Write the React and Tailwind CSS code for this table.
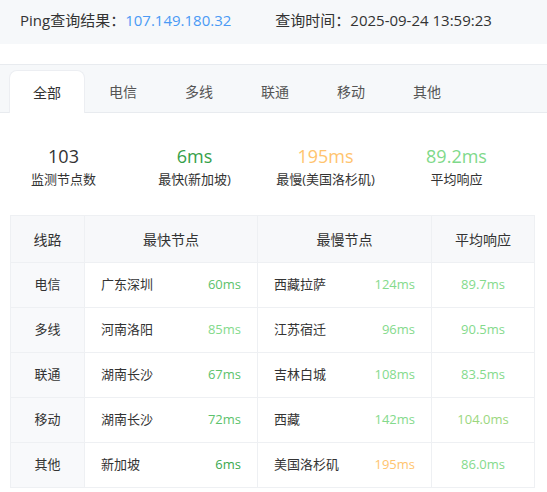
import React from 'react';

const FONT = { fontFamily: '"Open Sans", "Noto Sans CJK SC", sans-serif' };

const TABS = ['全部', '电信', '多线', '联通', '移动', '其他'];

const STATS = [
  { value: '103', label: '监测节点数', color: 'text-[#333333]' },
  { value: '6ms', label: '最快(新加坡)', color: 'text-[#36a04a]' },
  { value: '195ms', label: '最慢(美国洛杉矶)', color: 'text-[#ffc46e]' },
  { value: '89.2ms', label: '平均响应', color: 'text-[#7fd98a]' },
];

const ROWS = [
  { line: '电信', fast: '广东深圳', fastMs: '60ms', fastColor: 'text-[#5cc26c]', slow: '西藏拉萨', slowMs: '124ms', slowColor: 'text-[#84da8c]', avg: '89.7ms', avgColor: 'text-[#84da8c]' },
  { line: '多线', fast: '河南洛阳', fastMs: '85ms', fastColor: 'text-[#84da8c]', slow: '江苏宿迁', slowMs: '96ms', slowColor: 'text-[#84da8c]', avg: '90.5ms', avgColor: 'text-[#84da8c]' },
  { line: '联通', fast: '湖南长沙', fastMs: '67ms', fastColor: 'text-[#5cc26c]', slow: '吉林白城', slowMs: '108ms', slowColor: 'text-[#84da8c]', avg: '83.5ms', avgColor: 'text-[#84da8c]' },
  { line: '移动', fast: '湖南长沙', fastMs: '72ms', fastColor: 'text-[#5cc26c]', slow: '西藏', slowMs: '142ms', slowColor: 'text-[#84da8c]', avg: '104.0ms', avgColor: 'text-[#9bd77e]' },
  { line: '其他', fast: '新加坡', fastMs: '6ms', fastColor: 'text-[#3aa84e]', slow: '美国洛杉矶', slowMs: '195ms', slowColor: 'text-[#ffc46e]', avg: '86.0ms', avgColor: 'text-[#84da8c]' },
];

export default function App() {
  return (
    <div className="w-[547px] h-[492px] bg-white overflow-hidden text-[#333333]" style={FONT}>
      {/* Query summary */}
      <div className="h-[44px] bg-[#f6f8fa] pl-[20px] pt-[8px] flex gap-[44px] text-[15px] leading-[24px]">
        <div>
          Ping查询结果：<span className="text-[#4a9af5]">107.149.180.32</span>
        </div>
        <div>查询时间：2025-09-24 13:59:23</div>
      </div>

      <div className="h-[20px]" />

      {/* Tabs */}
      <div className="h-[49px] bg-[#f6f8fa] border-t border-b border-[#e8ebef] flex items-end pl-[9px]">
        {TABS.map((t, i) => (
          <div
            key={t}
            className={`w-[76px] h-[42px] flex items-center justify-center text-[14px] ${
              i === 0
                ? 'bg-white rounded-t-[8px] border border-b-0 border-[#eceef2] text-[#333333] -mb-px h-[43px]'
                : 'text-[#555555]'
            }`}
          >
            {t}
          </div>
        ))}
      </div>

      {/* Stats */}
      <div className="grid grid-cols-4 w-[524px] ml-[-2px] pt-[31px] h-[102px]">
        {STATS.map((s) => (
          <div key={s.label} className="flex flex-col items-center">
            <div className={`text-[18px] leading-[24px] ${s.color}`}>{s.value}</div>
            <div className="text-[13px] leading-[20px] mt-[1px] text-[#333333]">{s.label}</div>
          </div>
        ))}
      </div>

      {/* Table */}
      <div className="px-[10px]">
        <table className="w-[524px] border-collapse table-fixed">
          <colgroup>
            <col className="w-[74px]" />
            <col className="w-[173px]" />
            <col className="w-[174px]" />
            <col className="w-[103px]" />
          </colgroup>
          <thead>
            <tr className="h-[47px] bg-[#f7f8fa] text-[14px]">
              <th className="font-normal border border-[#eef0f3]">线路</th>
              <th className="font-normal border border-[#eef0f3]">最快节点</th>
              <th className="font-normal border border-[#eef0f3]">最慢节点</th>
              <th className="font-normal border border-[#eef0f3]">平均响应</th>
            </tr>
          </thead>
          <tbody>
            {ROWS.map((r) => (
              <tr key={r.line} className="h-[45px] text-[13px]">
                <td className="border border-[#eef0f3] bg-[#f8f9fb] text-center">{r.line}</td>
                <td className="border border-[#eef0f3] px-[16px]">
                  <div className="flex justify-between">
                    <span>{r.fast}</span>
                    <span className={r.fastColor}>{r.fastMs}</span>
                  </div>
                </td>
                <td className="border border-[#eef0f3] px-[16px]">
                  <div className="flex justify-between">
                    <span>{r.slow}</span>
                    <span className={r.slowColor}>{r.slowMs}</span>
                  </div>
                </td>
                <td className={`border border-[#eef0f3] text-center ${r.avgColor}`}>{r.avg}</td>
              </tr>
            ))}
          </tbody>
        </table>
      </div>
    </div>
  );
}
